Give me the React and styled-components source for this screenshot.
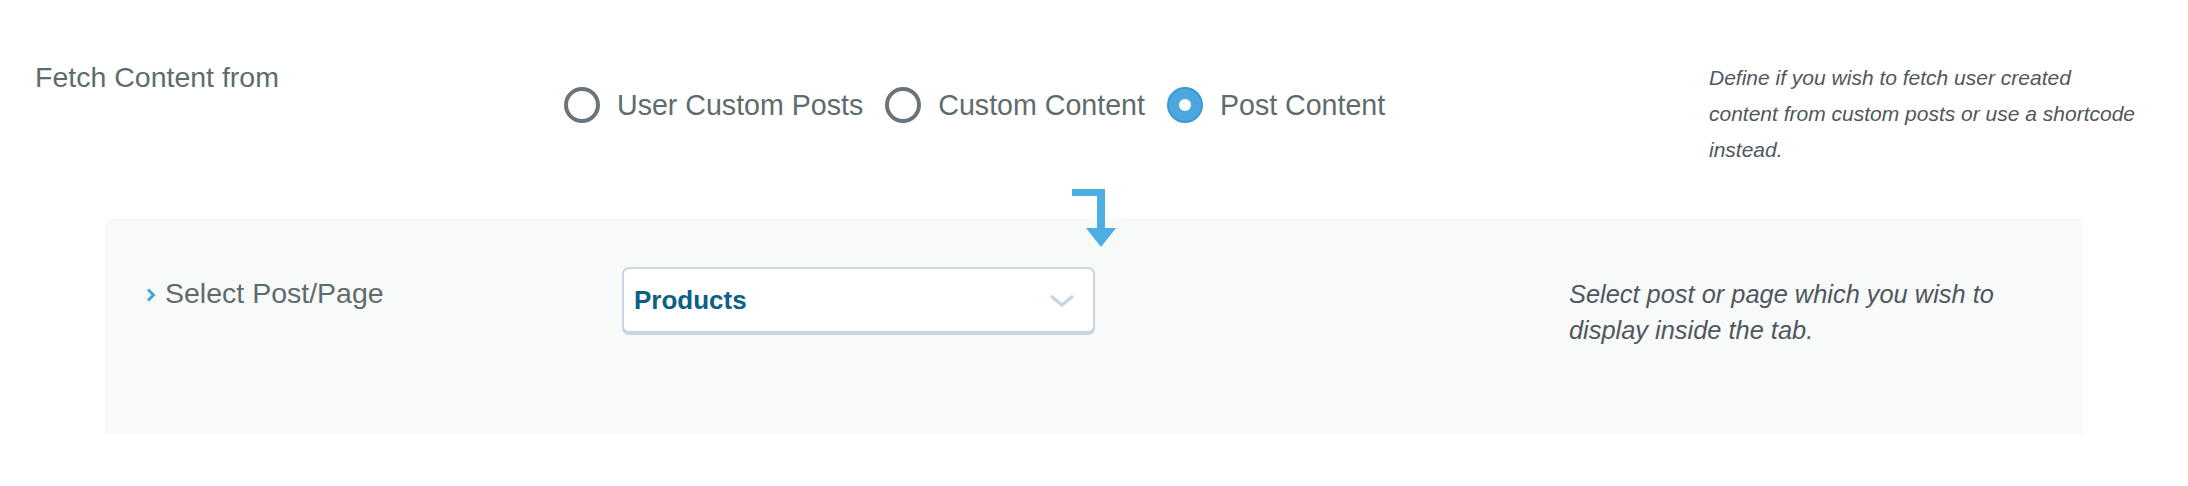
import React, { useState } from 'react';
import styled, { createGlobalStyle } from 'styled-components';

const SOURCES = ['User Custom Posts', 'Custom Content', 'Post Content'];

const GlobalStyle = createGlobalStyle`
  body {
    margin: 0;
    background: #ffffff;
    font-family: "Liberation Sans", Arial, sans-serif;
  }
`;

export default function App() {
  const [source, setSource] = useState('Post Content');

  return (
    <Page>
      <GlobalStyle />
      <TopRow>
        <FieldLabel>Fetch Content from</FieldLabel>
        <RadioGroup>
          {SOURCES.map((s) => (
            <RadioOption key={s} onClick={() => setSource(s)}>
              <RadioMark $checked={source === s} />
              {s}
            </RadioOption>
          ))}
        </RadioGroup>
        <Description $size={21} $width={432}>
          Define if you wish to fetch user created content from custom posts or use a shortcode instead.
        </Description>
      </TopRow>

      <Panel>
        <DependsArrow width="44" height="58" viewBox="0 0 44 58">
          <rect x="0" y="0" width="33" height="7" />
          <rect x="25" y="0" width="8" height="40" />
          <polygon points="14,39 44,39 29,58" />
        </DependsArrow>

        <PanelLabel>
          <svg width="10" height="14" viewBox="0 0 10 14">
            <polyline points="2,1.5 7.5,7 2,12.5" fill="none" stroke="#41a6e0" strokeWidth="3" />
          </svg>
          Select Post/Page
        </PanelLabel>

        <Select>
          <SelectValue>Products</SelectValue>
          <svg width="26" height="13" viewBox="0 0 26 13">
            <polyline points="2,2 13,11 24,2" fill="none" stroke="#c9d6e1" strokeWidth="3.5" />
          </svg>
        </Select>

        <Description $size={25.4} $width={470}>
          Select post or page which you wish to display inside the tab.
        </Description>
      </Panel>
    </Page>
  );
}

const Page = styled.div`
  width: 2188px;
  height: 486px;
`;

const TopRow = styled.div`
  display: grid;
  grid-template-columns: 529px 1145px 1fr;
  align-items: start;
  height: 219px;
  box-sizing: border-box;
  padding: 59px 0 0 35px;
`;

const FieldLabel = styled.div`
  font-size: 28.5px;
  line-height: 36px;
  color: #5e6c6e;
`;

const RadioGroup = styled.div`
  display: flex;
  align-items: center;
  gap: 22px;
  margin-top: 28px;
`;

const RadioOption = styled.label`
  display: flex;
  align-items: center;
  gap: 17px;
  font-size: 28.6px;
  line-height: 36px;
  color: #5e6c6e;
  cursor: pointer;
`;

const RadioMark = styled.span`
  display: flex;
  align-items: center;
  justify-content: center;
  width: 36px;
  height: 36px;
  box-sizing: border-box;
  border-radius: 50%;
  border: ${(p) => (p.$checked ? '2px solid #3c9ad4' : '4px solid #6b747d')};
  background: ${(p) => (p.$checked ? '#4ba7de' : '#ffffff')};

  &::after {
    content: '';
    display: ${(p) => (p.$checked ? 'block' : 'none')};
    width: 12px;
    height: 12px;
    border-radius: 50%;
    background: #ffffff;
  }
`;

const Description = styled.p`
  margin: 1px 0 0;
  width: ${(p) => p.$width}px;
  font-size: ${(p) => p.$size}px;
  line-height: 36px;
  font-style: italic;
  color: #50575e;
`;

const Panel = styled.div`
  position: relative;
  display: grid;
  grid-template-columns: 476px 947px 1fr;
  align-items: start;
  margin-left: 105px;
  width: 1978px;
  height: 215px;
  box-sizing: border-box;
  padding: 48px 0 0 41px;
  background: #f8f9f9;

  & > ${Description} {
    margin-top: 9px;
  }
`;

const DependsArrow = styled.svg`
  position: absolute;
  left: 967px;
  top: -30px;
  fill: #4daee3;
`;

const PanelLabel = styled.div`
  display: flex;
  align-items: center;
  gap: 9px;
  margin-top: 8px;
  font-size: 28.5px;
  line-height: 36px;
  color: #5e6c6e;

  svg {
    margin-top: 4px;
  }
`;

const Select = styled.div`
  display: flex;
  align-items: center;
  justify-content: space-between;
  width: 473px;
  height: 66px;
  box-sizing: border-box;
  padding: 0 18px 0 10px;
  border: 2px solid #c8d6e2;
  border-radius: 7px;
  box-shadow: 0 2px 0 #c8d6e2;
  background: #ffffff;
`;

const SelectValue = styled.span`
  font-size: 26px;
  font-weight: 700;
  color: #0d5f86;
`;
